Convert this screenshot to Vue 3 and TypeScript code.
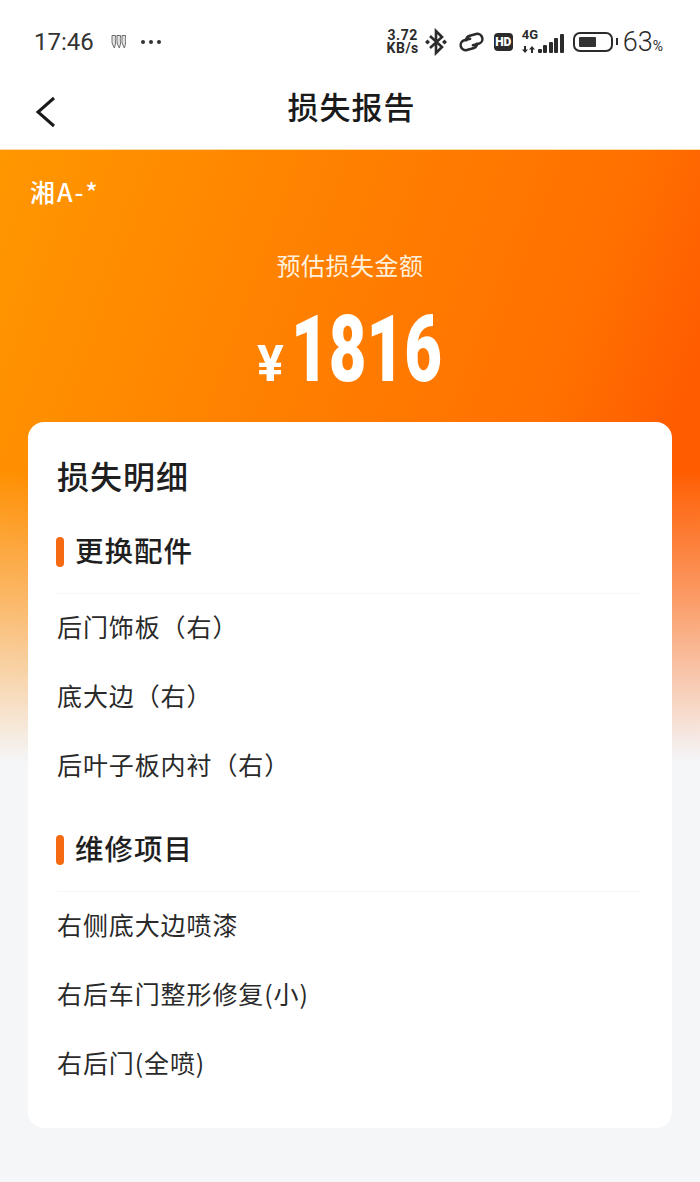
<script setup lang="ts">
interface Section {
  title: string
  items: string[]
}

const sections: Section[] = [
  { title: '更换配件', items: ['后门饰板（右）', '底大边（右）', '后叶子板内衬（右）'] },
  { title: '维修项目', items: ['右侧底大边喷漆', '右后车门整形修复(小)', '右后门(全喷)'] },
]

const signalBars = [4, 8, 11, 15, 19]
</script>

<template>
  <div class="page">
    <!-- status bar -->
    <div class="status-bar">
      <div class="status-left">
        <span class="time">17:46</span>
        <svg class="heat" width="16" height="16" viewBox="0 0 16 16" fill="#e4e4e4" stroke="#6e6e6e" stroke-width="1">
          <path d="M1 1.500h3.500c.3 2.500-.6 3.500 0 6 .4 2-.4 4-1.200 6.500C2 11 .6 9 1 6.500z" />
          <path d="M6 1.500h3.500c.3 2.500-.6 3.500 0 6 .4 2-.4 4-1.200 6.500C7 11 5.600 9 6 6.500z" />
          <path d="M11 1.500h3.500c.3 2.500-.6 3.500 0 6 .4 2-.4 4-1.200 6.500-1.300-3-2.700-5-2.300-7.500z" />
        </svg>
        <span class="dots"><i></i><i></i><i></i></span>
      </div>
      <div class="status-right">
        <div class="speed"><span>3.72</span><span>KB/s</span></div>
        <svg class="bt" width="24" height="28" viewBox="0 0 24 28" fill="none" stroke="#2b2b2b" stroke-width="2.600">
          <path d="M6 8l12 11-6 6V3l6 6L6 20" />
          <path d="M1 14l2.500-2.500L6 14l-2.500 2.500zM18 14l2.500-2.500L23 14l-2.500 2.500z" fill="#2b2b2b" stroke="none" />
        </svg>
        <svg class="link" width="27" height="22" viewBox="0 0 27 22" fill="none" stroke="#2b2b2b" stroke-width="2.500" stroke-linecap="round">
          <g transform="rotate(-15 13.500 11)">
            <path d="M13 7.500H7a5 5 0 0 0 0 10h6.500a5 5 0 0 0 4.800-3.500" />
            <path d="M14 14.500h6a5 5 0 0 0 0-10h-6.500a5 5 0 0 0-4.800 3.500" />
          </g>
        </svg>
        <span class="hd">HD</span>
        <div class="net">
          <div class="net-left">
            <span class="net-label">4G</span>
            <svg width="14" height="7" viewBox="0 0 14 7" fill="#2b2b2b">
              <path d="M2 0h2v3.500h2L3 7 0 3.500h2zM9 7h2V3.500h2L10 0 7 3.500h2z" />
            </svg>
          </div>
          <div class="bars">
            <i v-for="h in signalBars" :key="h" :style="{ height: h + 'px' }"></i>
          </div>
        </div>
        <div class="battery">
          <div class="battery-body"><div class="battery-fill"></div></div>
          <div class="battery-tip"></div>
        </div>
        <span class="percent">63<small>%</small></span>
      </div>
    </div>

    <!-- nav -->
    <header class="nav">
      <svg class="back" width="24" height="34" viewBox="0 0 24 34" fill="none" stroke="#1a1a1a" stroke-width="3">
        <path d="M20 3L4 17l16 14" />
      </svg>
      <h1 class="nav-title">损失报告</h1>
    </header>

    <main class="content">
      <div class="plate">湘A-*</div>
      <div class="summary">
        <div class="summary-label">预估损失金额</div>
        <div class="amount">
          <span class="currency">¥</span>
          <span class="value">1816</span>
        </div>
      </div>

      <section class="card">
        <h2 class="card-title">损失明细</h2>
        <div v-for="sec in sections" :key="sec.title" class="group">
          <div class="group-head">
            <span class="marker"></span>
            <h3>{{ sec.title }}</h3>
          </div>
          <ul class="rows">
            <li v-for="item in sec.items" :key="item">{{ item }}</li>
          </ul>
        </div>
      </section>
    </main>
  </div>
</template>

<style>
html, body { margin: 0; background: #f5f6f8; }
</style>

<style scoped>
.page {
  width: 700px;
  height: 1182px;
  overflow: hidden;
  background: #fff;
  font-family: "Noto Sans CJK SC", "Noto Sans", sans-serif;
  color: #1f1f1f;
}

.status-bar {
  height: 75px;
  box-sizing: border-box;
  padding: 8px 37px 0 34px;
  display: flex;
  align-items: center;
  justify-content: space-between;
}
.status-left { display: flex; align-items: center; }
.time { font-family: Roboto, sans-serif; font-size: 24px; font-weight: 400; color: #333; }
.heat { margin-left: 17px; }
.dots { display: flex; gap: 4px; margin-left: 14px; }
.dots i { width: 4px; height: 4px; border-radius: 50%; background: #333; }

.status-right { display: flex; align-items: center; color: #2b2b2b; }
.speed { display: flex; flex-direction: column; align-items: center; font-family: Roboto, sans-serif; font-size: 14px; font-weight: 700; line-height: 13px; letter-spacing: 0.5px; }
.bt { margin-left: 5px; }
.link { margin-left: 10px; }
.hd {
  width: 19px; height: 18px; border-radius: 4px; background: #2b2b2b; color: #fff;
  font-family: Roboto, sans-serif; font-size: 12px; font-weight: 900;
  display: flex; align-items: center; justify-content: center; margin-left: 9px;
}
.net { display: flex; align-items: flex-end; gap: 2px; margin-left: 9px; }
.net-left { display: flex; flex-direction: column; gap: 6px; width: 14px; }
.net-label { font-family: Roboto, sans-serif; font-size: 13px; font-weight: 700; line-height: 10px; white-space: nowrap; }
.bars { display: flex; align-items: flex-end; gap: 1.500px; }
.bars i { width: 4px; background: #2b2b2b; border-radius: 1px; }

.battery { display: flex; align-items: center; gap: 3px; margin-left: 9px; }
.battery-body {
  width: 40px; height: 20px; box-sizing: border-box; padding: 3px 4px;
  border: 2px solid #2b2b2b; border-radius: 7px;
}
.battery-fill { width: 62%; height: 100%; background: #333; border-radius: 1px; }
.battery-tip { width: 2px; height: 7px; background: #2b2b2b; }
.percent { font-family: Roboto, sans-serif; font-size: 27px; font-weight: 300; color: #2b2b2b; margin-left: 5px; }
.percent small { font-size: 14px; font-weight: 400; }

.nav {
  height: 75px;
  box-sizing: border-box;
  border-bottom: 1px solid #fbdca6;
  position: relative;
  display: flex;
  align-items: center;
  justify-content: center;
}
.back { position: absolute; left: 34px; top: 20px; }
.nav-title { margin: 0 0 14px 3px; font-size: 31px; font-weight: 500; letter-spacing: 1px; color: #1a1a1a; }

.content {
  height: 1032px;
  box-sizing: border-box;
  padding: 0 28px;
  background:
    linear-gradient(180deg, rgba(245, 246, 248, 0) 320px, rgba(245, 246, 248, 0.42) 450px, #f5f6f8 612px),
    linear-gradient(110deg, #ff9700 0%, #ff8200 30%, #ff7000 60%, #ff5c00 72%);
}
.plate { padding: 24px 0 0 2px; font-size: 25px; font-weight: 500; line-height: 34px; color: #fff; height: 40px; letter-spacing: 2px; }

.summary { text-align: center; color: #fff; padding-top: 33px; }
.summary-label { font-size: 24px; line-height: 36px; color: #fff0dc; letter-spacing: 0.5px; }
.amount { display: flex; align-items: baseline; justify-content: center; height: 100px; margin-top: 17px; line-height: 100px; }
.currency { font-family: Roboto, sans-serif; font-size: 50px; font-weight: 700; margin-right: 7px; }
.value {
  display: inline-block;
  width: 152px;
  font-family: Roboto, sans-serif;
  font-size: 93px;
  font-weight: 900;
  transform: scaleX(0.7);
  transform-origin: left center;
  white-space: nowrap;
}

.card {
  margin-top: 22px;
  height: 706px;
  box-sizing: border-box;
  padding: 28px 32px 0 29px;
  background: #fff;
  border-radius: 16px;
}
.card-title { margin: 0; font-size: 32px; font-weight: 500; line-height: 50px; letter-spacing: 1px; color: #1f1f1f; }

.group-head { display: flex; align-items: center; margin: 24px 0 0 -1px; height: 50px; }
.group + .group .group-head { margin-top: 21px; }
.marker { width: 8px; height: 30px; border-radius: 4px; background: #f56a12; margin: 6px 11px 0 0; }
.group-head h3 { margin: 0; font-size: 28.500px; font-weight: 500; letter-spacing: 1px; color: #1f1f1f; }

.rows {
  list-style: none;
  margin: 19px 0 0;
  padding: 0;
  border-top: 1px solid #f6f6f6;
}
.rows li {
  height: 69px;
  box-sizing: border-box;
  padding-bottom: 6px;
  display: flex;
  align-items: center;
  font-size: 25px;
  color: #2a2a2a;
  letter-spacing: 0.9px;
}
</style>
